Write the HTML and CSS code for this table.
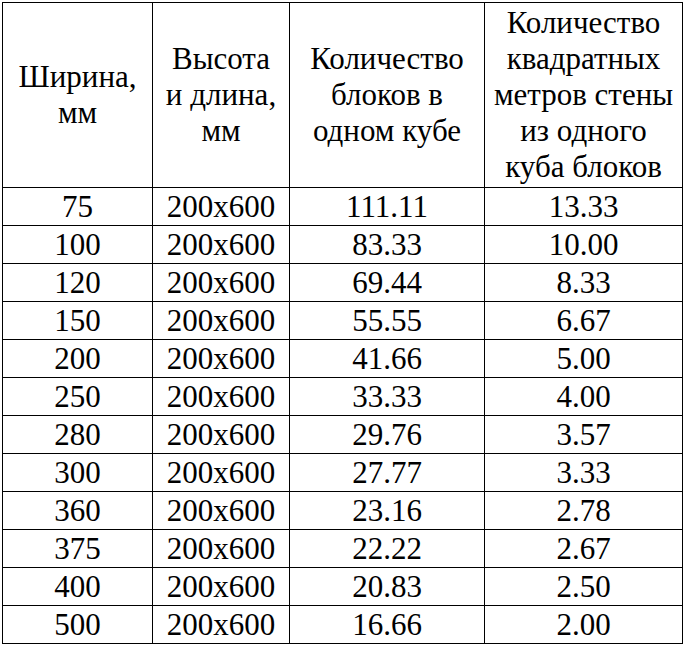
FILE: index.html
```
<!DOCTYPE html>
<html lang="ru">
<head>
<meta charset="utf-8">
<link rel="stylesheet" href="styles.css">
</head>
<body>
<table class="blocks">
  <colgroup>
    <col class="c1"><col class="c2"><col class="c3"><col class="c4">
  </colgroup>
  <thead>
    <tr class="head">
      <th>Ширина,<br>мм</th>
      <th>Высота<br>и длина,<br>мм</th>
      <th>Количество<br>блоков в<br>одном кубе</th>
      <th>Количество<br>квадратных<br>метров стены<br>из одного<br>куба блоков</th>
    </tr>
  </thead>
  <tbody>
    <tr><td>75</td><td>200x600</td><td>111.11</td><td>13.33</td></tr>
    <tr><td>100</td><td>200x600</td><td>83.33</td><td>10.00</td></tr>
    <tr><td>120</td><td>200x600</td><td>69.44</td><td>8.33</td></tr>
    <tr><td>150</td><td>200x600</td><td>55.55</td><td>6.67</td></tr>
    <tr><td>200</td><td>200x600</td><td>41.66</td><td>5.00</td></tr>
    <tr><td>250</td><td>200x600</td><td>33.33</td><td>4.00</td></tr>
    <tr><td>280</td><td>200x600</td><td>29.76</td><td>3.57</td></tr>
    <tr><td>300</td><td>200x600</td><td>27.77</td><td>3.33</td></tr>
    <tr><td>360</td><td>200x600</td><td>23.16</td><td>2.78</td></tr>
    <tr><td>375</td><td>200x600</td><td>22.22</td><td>2.67</td></tr>
    <tr><td>400</td><td>200x600</td><td>20.83</td><td>2.50</td></tr>
    <tr><td>500</td><td>200x600</td><td>16.66</td><td>2.00</td></tr>
  </tbody>
</table>
</body>
</html>
```
FILE: styles.css
```
html {
  background: #ffffff;
}
body {
  margin: 0;
  padding: 2px 0 0 2px;
  font-family: "Liberation Serif", "Times New Roman", serif;
  color: #000;
}
.blocks {
  border-collapse: collapse;
  table-layout: fixed;
  width: 680px;
  font-family: "Liberation Serif", "Times New Roman", serif;
  font-size: 31px;
  line-height: 36px;
}
.c1 { width: 150px; }
.c2 { width: 137px; }
.c3 { width: 195px; }
.c4 { width: 198px; }
.blocks th,
.blocks td {
  border: 1px solid #000;
  padding: 0;
  text-align: center;
  vertical-align: middle;
  font-weight: normal;
  white-space: nowrap;
  overflow: hidden;
}
.head th {
  height: 184px;
}
.blocks td {
  height: 37px;
  line-height: 37px;
}
```
